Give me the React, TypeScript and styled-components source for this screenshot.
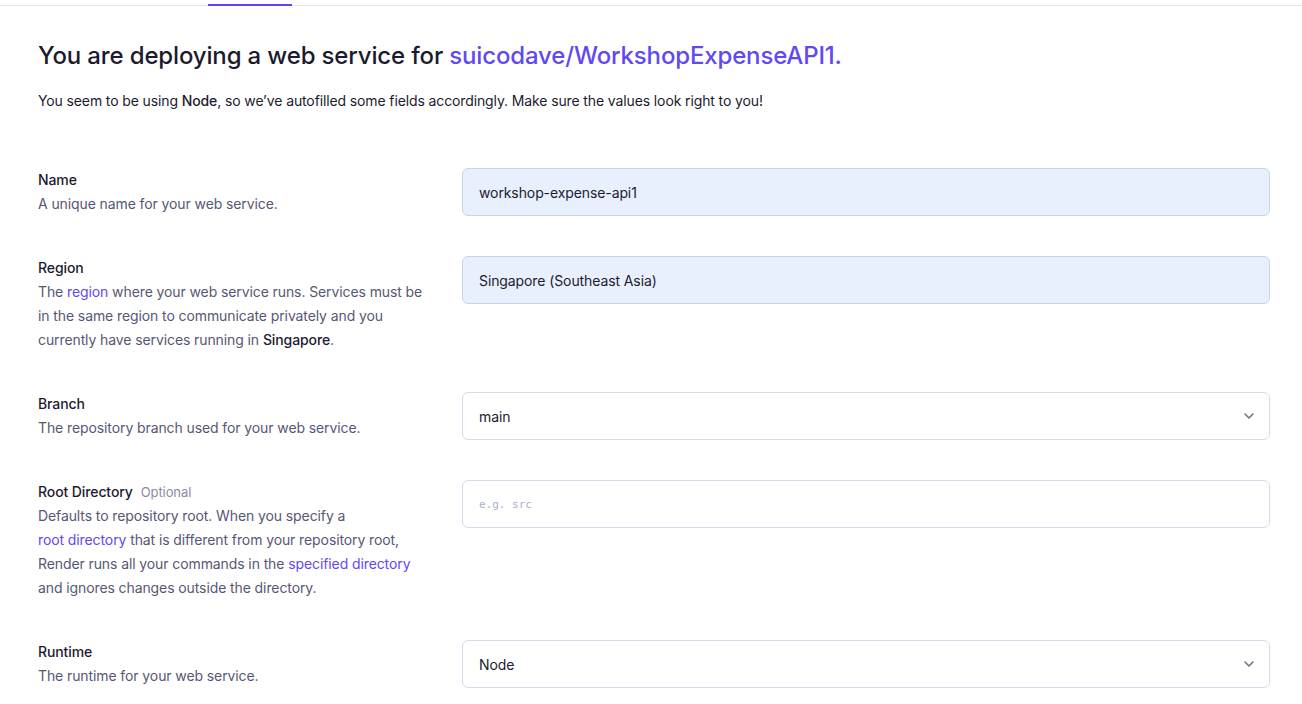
import React from "react";
import styled, { createGlobalStyle } from "styled-components";

const Global = createGlobalStyle`
  html, body { margin: 0; padding: 0; background: #ffffff; }
  body { font-family: Inter, "Noto Sans", sans-serif; color: #1c1b2e; -webkit-font-smoothing: antialiased; }
  * { box-sizing: border-box; }
`;

const TabBar = styled.div`
  height: 6px;
  border-bottom: 1px solid #e3e5f0;
  display: flex;
  align-items: flex-end;
  padding-left: 208px;
`;

const ActiveTab = styled.div`
  width: 84px;
  height: 2px;
  background: #5f48f0;
  margin-bottom: -1px;
`;

const Page = styled.main`
  padding: 34px 32px 0 38px;
`;

const Title = styled.h1`
  margin: 0;
  font-size: 24px;
  line-height: 32px;
  font-weight: 500;
  letter-spacing: -0.15px;
  color: #1c1b2e;
`;

const Link = styled.span`
  color: #6149f2;
  white-space: nowrap;
`;

const Intro = styled.p`
  margin: 19px 0 0;
  font-size: 14px;
  line-height: 20px;
  letter-spacing: -0.12px;
  color: #1c1b2e;
`;

const Strong = styled.strong`
  font-weight: 500;
  color: #1c1b2e;
`;

const Form = styled.div`
  margin-top: 57px;
  display: flex;
  flex-direction: column;
  gap: 40px;
`;

const Row = styled.div`
  display: grid;
  grid-template-columns: 400px 1fr;
  column-gap: 24px;
  align-items: start;
`;

const Info = styled.div`
  font-size: 14px;
  line-height: 24px;
  letter-spacing: -0.1px;
`;

const Label = styled.div`
  font-weight: 500;
  color: #1c1b2e;
  display: flex;
  align-items: baseline;
  gap: 8px;
`;

const Optional = styled.span`
  font-weight: 400;
  font-size: 13px;
  color: #8b8ba8;
`;

const Desc = styled.div`
  max-width: 390px;
  color: #575775;
`;

const Field = styled.div<{ $filled?: boolean }>`
  height: 48px;
  border: 1px solid ${(p) => (p.$filled ? "#c9d4ea" : "#d5dcee")};
  background: ${(p) => (p.$filled ? "#e8f0fe" : "#ffffff")};
  border-radius: 6px;
  display: flex;
  align-items: center;
  justify-content: space-between;
  padding: 0 13px 0 16px;
  font-size: 14px;
  letter-spacing: -0.1px;
  color: #1c1b2e;
`;

const Placeholder = styled.span`
  font-family: "DejaVu Sans Mono", "Liberation Mono", monospace;
  font-size: 11px;
  letter-spacing: 0;
  color: #a9b0cc;
`;

const Chevron = () => (
  <svg width="14" height="14" viewBox="0 0 14 14" fill="none">
    <path d="M3 5 L7 9 L11 5" stroke="#6e6e86" strokeWidth="1.5" strokeLinecap="round" strokeLinejoin="round" />
  </svg>
);

export default function App() {
  return (
    <>
      <Global />
      <TabBar>
        <ActiveTab />
      </TabBar>
      <Page>
        <Title>
          You are deploying a web service for <Link>suicodave/WorkshopExpenseAPI1.</Link>
        </Title>
        <Intro>
          You seem to be using <Strong>Node</Strong>, so we’ve autofilled some fields accordingly. Make sure the values look right to you!
        </Intro>
        <Form>
          <Row>
            <Info>
              <Label>Name</Label>
              <Desc>A unique name for your web service.</Desc>
            </Info>
            <Field $filled>workshop-expense-api1</Field>
          </Row>
          <Row>
            <Info>
              <Label>Region</Label>
              <Desc>
                The <Link>region</Link> where your web service runs. Services must be in the same region to communicate privately and you currently have services running in <Strong>Singapore</Strong>.
              </Desc>
            </Info>
            <Field $filled>Singapore (Southeast Asia)</Field>
          </Row>
          <Row>
            <Info>
              <Label>Branch</Label>
              <Desc>The repository branch used for your web service.</Desc>
            </Info>
            <Field>
              main
              <Chevron />
            </Field>
          </Row>
          <Row>
            <Info>
              <Label>
                Root Directory <Optional>Optional</Optional>
              </Label>
              <Desc>
                Defaults to repository root. When you specify a <Link>root directory</Link> that is different from your repository root, Render runs all your commands in the <Link>specified directory</Link> and ignores changes outside the directory.
              </Desc>
            </Info>
            <Field>
              <Placeholder>e.g. src</Placeholder>
            </Field>
          </Row>
          <Row>
            <Info>
              <Label>Runtime</Label>
              <Desc>The runtime for your web service.</Desc>
            </Info>
            <Field>
              Node
              <Chevron />
            </Field>
          </Row>
        </Form>
      </Page>
    </>
  );
}
